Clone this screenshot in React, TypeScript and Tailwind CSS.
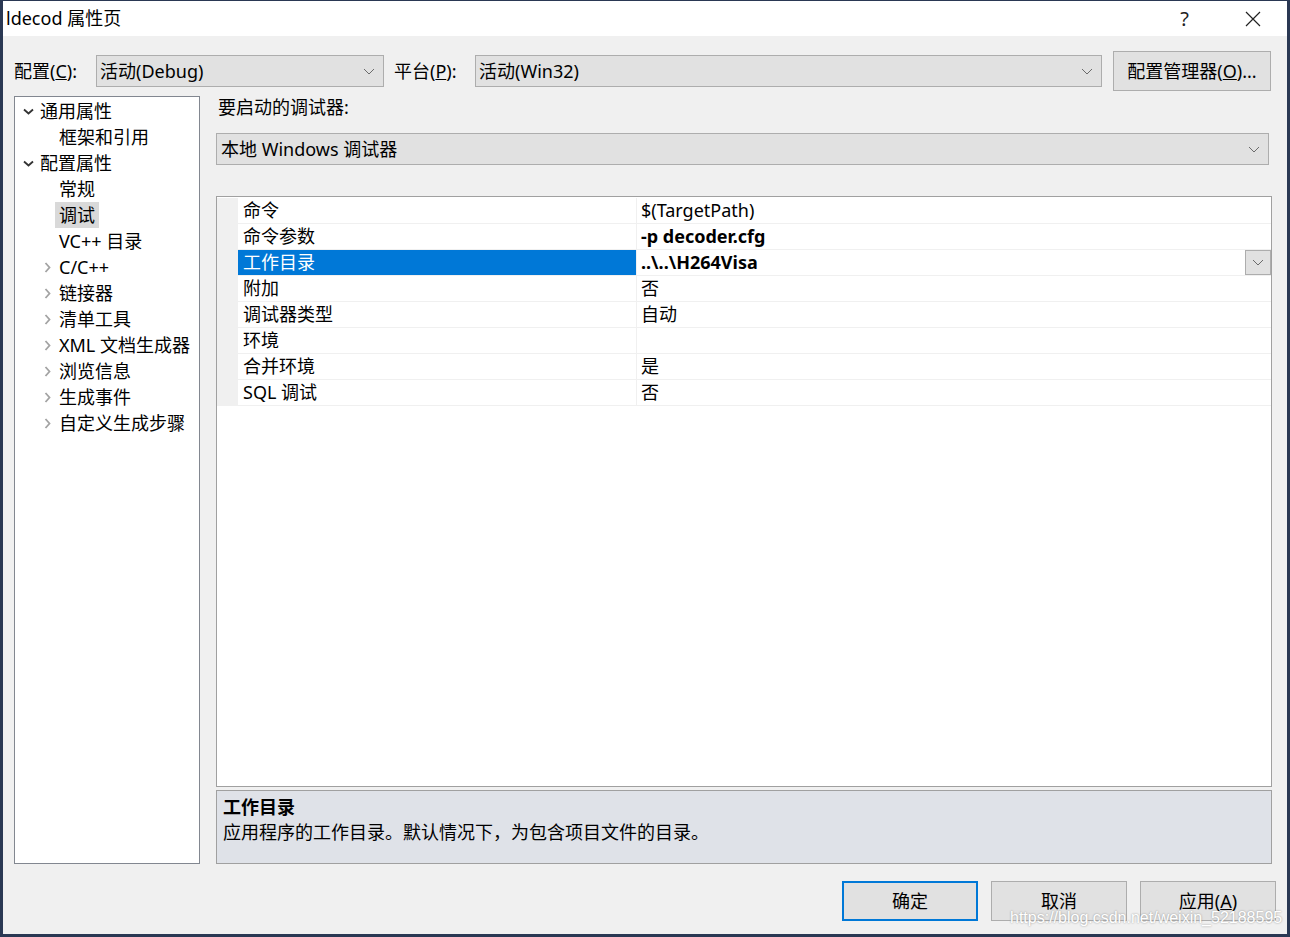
import React from "react"

const font = "font-['Noto_Sans','Noto_Sans_CJK_SC',sans-serif]"

function Chevron({ className = "" }: { className?: string }) {
  return (
    <svg width="12" height="7" viewBox="0 0 12 7" className={className}>
      <path d="M1 1 L6 6 L11 1" fill="none" stroke="#6b6b6b" strokeWidth="1" />
    </svg>
  )
}

function Select({ label, className = "" }: { label: string; className?: string }) {
  return (
    <div
      className={
        "flex h-[32px] items-center justify-between border border-[#adadad] bg-[#e1e1e1] pl-[3px] pr-[8px] pt-[1px] text-[18px] text-black " +
        className
      }
    >
      <span>{label}</span>
      <Chevron />
    </div>
  )
}

function TreeItem({
  label,
  level,
  arrow,
  selected,
}: {
  label: string
  level: number
  arrow?: "down" | "right"
  selected?: boolean
}) {
  return (
    <div className="flex h-[26px] items-center whitespace-nowrap">
      <div
        className={
          "flex shrink-0 items-center " + (level === 0 ? "w-[25px] pl-[8px]" : "w-[44px] pl-[29px]")
        }
      >
        {arrow === "down" && (
          <svg width="11" height="7" viewBox="0 0 11 7">
            <path d="M1 1.5 L5.5 5.5 L10 1.5" fill="none" stroke="#333" strokeWidth="1.8" />
          </svg>
        )}
        {arrow === "right" && (
          <svg width="7" height="11" viewBox="0 0 7 11">
            <path d="M1.5 1 L5.5 5.5 L1.5 10" fill="none" stroke="#a3a3a3" strokeWidth="1.8" />
          </svg>
        )}
      </div>
      <span
        className={
          "h-[26px] leading-[26px] " + (selected ? "-ml-[4px] bg-[#d9d9d9] px-[4px]" : "")
        }
      >
        {label}
      </span>
    </div>
  )
}

const tree: { label: string; level: number; arrow?: "down" | "right"; selected?: boolean }[] = [
  { label: "通用属性", level: 0, arrow: "down" },
  { label: "框架和引用", level: 1 },
  { label: "配置属性", level: 0, arrow: "down" },
  { label: "常规", level: 1 },
  { label: "调试", level: 1, selected: true },
  { label: "VC++ 目录", level: 1 },
  { label: "C/C++", level: 1, arrow: "right" },
  { label: "链接器", level: 1, arrow: "right" },
  { label: "清单工具", level: 1, arrow: "right" },
  { label: "XML 文档生成器", level: 1, arrow: "right" },
  { label: "浏览信息", level: 1, arrow: "right" },
  { label: "生成事件", level: 1, arrow: "right" },
  { label: "自定义生成步骤", level: 1, arrow: "right" },
]

const rows: { name: string; value: string; bold?: boolean; selected?: boolean }[] = [
  { name: "命令", value: "$(TargetPath)" },
  { name: "命令参数", value: "-p decoder.cfg", bold: true },
  { name: "工作目录", value: "..\\..\\H264Visa", bold: true, selected: true },
  { name: "附加", value: "否" },
  { name: "调试器类型", value: "自动" },
  { name: "环境", value: "" },
  { name: "合并环境", value: "是" },
  { name: "SQL 调试", value: "否" },
]

function Button({ children, primary }: { children: React.ReactNode; primary?: boolean }) {
  return (
    <div
      className={
        "flex h-[40px] w-[136px] items-center justify-center bg-[#e1e1e1] text-[18px] " +
        (primary ? "border-2 border-[#0078d7]" : "border border-[#adadad]")
      }
    >
      {children}
    </div>
  )
}

export default function App() {
  return (
    <div className={"relative h-[937px] w-[1290px] overflow-hidden bg-[#2a3853] " + font}>
      <div className="ml-[3px] mt-[1px] flex h-[933px] w-[1284px] flex-col bg-[#f0f0f0] text-[#000]">
        {/* title bar */}
        <div className="flex h-[35px] shrink-0 items-center bg-white pl-[3px] text-[18px]">
          <span className="flex-1">ldecod 属性页</span>
          <span className="mr-[56px] text-[20px] text-[#222]">?</span>
          <svg width="16" height="16" viewBox="0 0 16 16" className="mr-[26px]">
            <path d="M1 1 L15 15 M15 1 L1 15" stroke="#222" strokeWidth="1.2" />
          </svg>
        </div>

        {/* config row */}
        <div className="mt-[15px] flex h-[40px] shrink-0 items-center text-[18px]">
          <span className="ml-[11px] w-[82px]">
            配置(<u>C</u>):
          </span>
          <Select label="活动(Debug)" className="w-[288px]" />
          <span className="ml-[10px] w-[81px]">
            平台(<u>P</u>):
          </span>
          <Select label="活动(Win32)" className="w-[627px]" />
          <div className="ml-[11px] flex h-[40px] w-[158px] items-center justify-center border border-[#adadad] bg-[#e1e1e1]">
            配置管理器(<u>O</u>)...
          </div>
        </div>

        {/* main */}
        <div className="mt-[5px] flex h-[768px] shrink-0 text-[18px]">
          <div className="ml-[11px] w-[186px] overflow-hidden border border-[#828790] bg-white pt-[1px]">
            {tree.map((t) => (
              <TreeItem key={t.label} {...t} />
            ))}
          </div>

          <div className="ml-[16px] flex w-[1056px] flex-col">
            <div className="ml-[2px] h-[22px] leading-[22px]">要启动的调试器:</div>
            <Select label="本地 Windows 调试器" className="mt-[15px] w-[1053px] pl-[4px]" />
            <div className="mt-[31px] flex h-[592px] flex-col border border-[#a0a0a0] bg-white">
              <div className="mt-[1px] flex flex-col">
                {rows.map((r) => (
                  <div key={r.name} className="flex h-[26px] bg-[#f0f0f0]">
                    <div className="w-[21px]" />
                    <div
                      className={
                        "flex w-[398px] items-center border-b border-[#f0f0f0] pl-[5px] pt-[1px] " +
                        (r.selected ? "bg-[#0078d7] text-white" : "bg-white")
                      }
                    >
                      {r.name}
                    </div>
                    <div className="w-[1px] bg-[#f0f0f0]" />
                    <div
                      className={
                        "flex flex-1 items-center border-b border-[#f0f0f0] bg-white pl-[4px] pt-[1px] " +
                        (r.bold ? "font-bold" : "")
                      }
                    >
                      <span className="flex-1">{r.value}</span>
                      {r.selected && (
                        <div className="flex h-[25px] w-[26px] items-center justify-center border border-[#adadad] bg-[#e1e1e1]">
                          <Chevron />
                        </div>
                      )}
                    </div>
                  </div>
                ))}
              </div>
            </div>
            <div className="mt-[3px] flex h-[74px] flex-col border border-[#a0a0a0] bg-[#dfe2e8] pl-[6px] pt-[4px]">
              <div className="h-[24px] font-bold leading-[24px]">工作目录</div>
              <div className="h-[26px] leading-[26px]">应用程序的工作目录。默认情况下，为包含项目文件的目录。</div>
            </div>
          </div>
        </div>

        {/* buttons */}
        <div className="mt-[17px] flex shrink-0 justify-end gap-[13px] pr-[11px]">
          <Button primary>确定</Button>
          <Button>取消</Button>
          <Button>
            应用(<u>A</u>)
          </Button>
        </div>
      </div>

      <div className="absolute left-[1010px] top-[906px] whitespace-nowrap font-['Liberation_Sans',sans-serif] text-[16px] text-white [text-shadow:0_0_2px_#8a8a8a]">
        https://blog.csdn.net/weixin_52188595
      </div>
    </div>
  )
}
